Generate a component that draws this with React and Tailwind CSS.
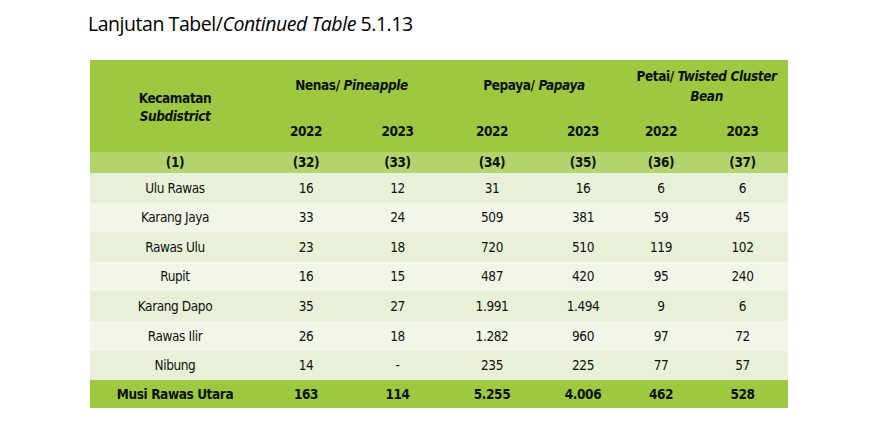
import React from 'react';

const rows = [
  ['Ulu Rawas', '16', '12', '31', '16', '6', '6'],
  ['Karang Jaya', '33', '24', '509', '381', '59', '45'],
  ['Rawas Ulu', '23', '18', '720', '510', '119', '102'],
  ['Rupit', '16', '15', '487', '420', '95', '240'],
  ['Karang Dapo', '35', '27', '1.991', '1.494', '9', '6'],
  ['Rawas Ilir', '26', '18', '1.282', '960', '97', '72'],
  ['Nibung', '14', '-', '235', '225', '77', '57'],
];

const total = ['Musi Rawas Utara', '163', '114', '5.255', '4.006', '462', '528'];
const codes = ['(1)', '(32)', '(33)', '(34)', '(35)', '(36)', '(37)'];
const widths = ['w-[170px]', 'w-[92px]', 'w-[91px]', 'w-[98px]', 'w-[84px]', 'w-[72px]', 'w-[91px]'];

const cond = { fontFamily: '"Liberation Sans Narrow", "DejaVu Sans Condensed", "Roboto Condensed", sans-serif' };

export default function App() {
  return (
    <div className="w-[875px] h-[421px] bg-white text-black pl-[88px] pt-[11px]">
      <h1
        className="text-[19.5px] leading-[26px] tracking-[-0.45px]"
        style={{ fontFamily: '"Open Sans", "Liberation Sans", sans-serif' }}
      >
        Lanjutan Tabel/<span className="italic">Continued Table</span> 5.1.13
      </h1>

      <table
        className="mt-[23px] ml-[2px] w-[698px] table-fixed border-collapse text-[13.5px] tracking-[-0.4px] text-[#111]"
        style={cond}
      >
        <colgroup>
          {widths.map((w, i) => (
            <col key={i} className={w} />
          ))}
        </colgroup>
        <thead>
          {/* group headers */}
          <tr className="bg-[#9cc93f] h-[50px] font-bold">
            <th rowSpan={2} className="align-middle leading-[18px] pt-[2px]">
              Kecamatan
              <br />
              <span className="italic">Subdistrict</span>
            </th>
            <th colSpan={2} className="align-middle">
              Nenas/ <span className="italic">Pineapple</span>
            </th>
            <th colSpan={2} className="align-middle">
              Pepaya/ <span className="italic">Papaya</span>
            </th>
            <th colSpan={2} className="align-middle leading-[20px] pt-[1px]">
              Petai/ <span className="italic">Twisted Cluster</span>
              <br />
              <span className="italic">Bean</span>
            </th>
          </tr>
          <tr className="bg-[#9cc93f] h-[42px] font-bold">
            {['2022', '2023', '2022', '2023', '2022', '2023'].map((y, i) => (
              <th key={i} className="align-middle">
                {y}
              </th>
            ))}
          </tr>
          <tr className="bg-[#b1d46c] h-[21px] font-bold">
            {codes.map((c) => (
              <th key={c} className="align-middle">
                {c}
              </th>
            ))}
          </tr>
        </thead>
        <tbody>
          {rows.map((r, i) => (
            <tr key={r[0]} className={(i % 2 === 0 ? 'bg-[#e8f1d8]' : 'bg-[#f1f6e8]') + ' h-[29.6px]'}>
              {r.map((v, j) => (
                <td key={j} className="text-center align-middle">
                  {v}
                </td>
              ))}
            </tr>
          ))}
          <tr className="bg-[#9cc93f] h-[28px] font-bold">
            {total.map((v, j) => (
              <td key={j} className="text-center align-middle">
                {v}
              </td>
            ))}
          </tr>
        </tbody>
      </table>
    </div>
  );
}
